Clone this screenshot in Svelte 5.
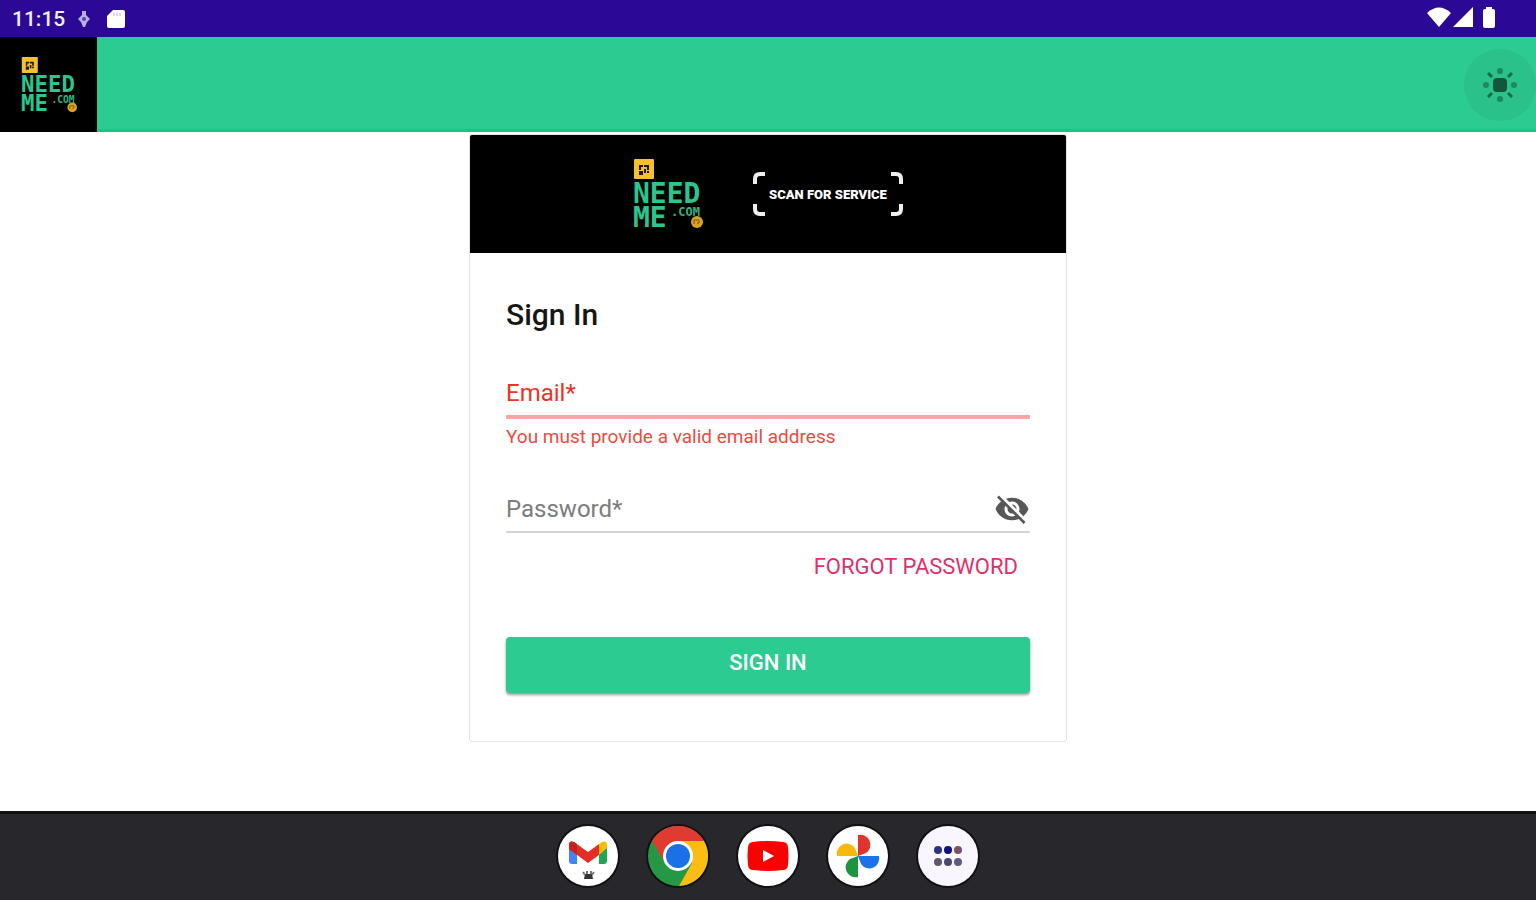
<script>
  let email = $state('');
  let password = $state('');
  let showPassword = $state(false);
  let emailError = $state('You must provide a valid email address');

  function signIn(event) {
    event.preventDefault();
    emailError = email.includes('@') ? '' : 'You must provide a valid email address';
  }
</script>

{#snippet logo()}
  <svg class="logo" viewBox="0 0 70 70" role="img" aria-label="NeedMe.com">
    <rect x="1" y="0" width="20" height="20" rx="1" fill="#f4c22f" />
    <path d="M6 6h4v2h-2v3h-2zM11 6h5v5h-2v-3h-3zM6 12h4v4h-4zM11 10h2v4h-2zM14 12h2v2h-2z" fill="#20180a" />
    <text x="0" y="44" class="logo-text">NEED</text>
    <text x="0" y="68" class="logo-text">ME</text>
    <text x="38" y="57" class="logo-small">.COM</text>
    <circle cx="64" cy="63" r="6" fill="#d9a421" />
    <path d="M61 65v-4h5v3h-2" fill="none" stroke="#76540c" stroke-width="1" />
  </svg>
{/snippet}

<div class="screen">
  <div class="status-bar">
    <div class="status-left">
      <span class="clock">11:15</span>
      <svg width="14" height="18" viewBox="0 0 14 18" fill="#b9aee6">
        <path d="M5 1h4v4l4 4-3 3-2 5h-2l-2-5-3-3 4-4z" />
        <circle cx="7" cy="9" r="2" fill="#5a42ad" />
      </svg>
      <svg class="card-icon" width="18" height="18" viewBox="0 0 18 18">
        <path d="M6 0h10a2 2 0 0 1 2 2v14a2 2 0 0 1-2 2H2a2 2 0 0 1-2-2V6z" fill="#fff" />
        <path d="M7 3v3M10 3v3M13 3v3" stroke="#b9b0dd" stroke-width="1" />
      </svg>
    </div>
    <div class="status-right">
      <svg width="24" height="20" viewBox="0 0 24 20">
        <path d="M12 20 0 6Q12-5 24 6z" fill="#fff" />
      </svg>
      <svg width="20" height="20" viewBox="0 0 20 20">
        <path d="M20 0v20H0z" fill="#fff" />
      </svg>
      <svg class="battery" width="12" height="21" viewBox="0 0 12 21">
        <path d="M3 0h6v2h1a2 2 0 0 1 2 2v15a2 2 0 0 1-2 2H2a2 2 0 0 1-2-2V4a2 2 0 0 1 2-2h1z" fill="#fff" />
      </svg>
    </div>
  </div>

  <header class="app-bar">
    <a class="home" href="/">{@render logo()}</a>
    <button class="theme" type="button" aria-label="Toggle brightness">
      <svg width="34" height="34" viewBox="0 0 34 34">
        <rect x="10" y="10" width="14" height="14" rx="4" fill="#12573d" />
        <g fill="#1f8660">
          <circle cx="17" cy="3" r="3" />
          <circle cx="17" cy="31" r="3" />
          <circle cx="3" cy="17" r="3" />
          <circle cx="31" cy="17" r="3" />
        </g>
        <path d="m5 5 4 4M29 5l-4 4M5 29l4-4M29 29l-4-4" stroke="#17694a" stroke-width="3" />
      </svg>
    </button>
  </header>

  <main>
    <section class="card">
      <div class="banner">
        {@render logo()}
        <div class="scan">
          <svg viewBox="0 0 150 44" fill="none" stroke="#eee" stroke-width="4">
            <path d="M2 12V7q0-5 5-5h5M138 2h5q5 0 5 5v5M2 32v5q0 5 5 5h5M138 42h5q5 0 5-5v-5" />
          </svg>
          <span>SCAN FOR SERVICE</span>
        </div>
      </div>

      <form onsubmit={signIn} novalidate>
        <h1>Sign In</h1>

        <div class="field" class:error={emailError}>
          <label for="email" class:hidden={email}>Email*</label>
          <input id="email" type="email" bind:value={email} aria-describedby="email-help" />
        </div>
        <p id="email-help" class="help">{emailError}</p>

        <div class="field">
          <label for="password" class:hidden={password}>Password*</label>
          <input id="password" type={showPassword ? 'text' : 'password'} bind:value={password} />
          <button class="eye" type="button" aria-label="Show password" onclick={() => (showPassword = !showPassword)}>
            <svg width="36" height="36" viewBox="0 0 24 24" fill="#575757">
              <path d="M12 7c2.760 0 5 2.240 5 5 0 .65-.13 1.260-.36 1.830l2.920 2.920c1.510-1.260 2.700-2.890 3.430-4.750-1.730-4.390-6-7.500-11-7.500-1.400 0-2.740.25-3.980.7l2.160 2.160C10.740 7.130 11.350 7 12 7zM2 4.270l2.280 2.280.46.46C3.080 8.300 1.780 10.020 1 12c1.730 4.390 6 7.500 11 7.500 1.550 0 3.030-.3 4.380-.84l.42.42L19.730 22 21 20.730 3.270 3 2 4.270zM7.530 9.800l1.550 1.550c-.05.21-.08.43-.08.65 0 1.660 1.340 3 3 3 .22 0 .44-.03.65-.08l1.550 1.550c-.67.33-1.410.53-2.200.53-2.760 0-5-2.240-5-5 0-.79.2-1.530.53-2.200zm4.310-.78 3.150 3.150.02-.16c0-1.660-1.340-3-3-3l-.17.01z" />
            </svg>
          </button>
        </div>

        <button class="forgot" type="button">FORGOT PASSWORD</button>
        <button class="submit" type="submit">SIGN IN</button>
      </form>
    </section>
  </main>

  <nav class="dock">
    <button type="button" aria-label="Gmail">
      <svg viewBox="0 0 60 60">
        <circle cx="30" cy="30" r="30" fill="#fff" />
        <path d="M11 19l8 7v12h-5q-3 0-3-3z" fill="#4285f4" />
        <path d="M49 19l-8 7v12h5q3 0 3-3z" fill="#21a453" />
        <path d="M41 18l3-2q5-2 5 3v3l-8 7z" fill="#fbbc04" />
        <path d="M11 19q0-5 5-3l14 10 11-8v11L30 37 11 23z" fill="#e52d27" />
        <path d="M11 19q0-5 5-3l3 2v11l-8-6z" fill="#c5221f" />
        <path d="M27 48h7l1 5h-9z" fill="#333" />
        <path d="M25 46l2 3M29 45v3M33 45v3M36 46l-2 3" stroke="#777" stroke-width="2" />
      </svg>
    </button>
    <button type="button" aria-label="Chrome">
      <svg viewBox="0 0 60 60">
        <circle cx="30" cy="30" r="30" fill="#259846" />
        <path d="M4 15A30 30 0 0 1 56 15H30L17 37z" fill="#df3b30" />
        <path d="M56 15A30 30 0 0 1 31 60L44 37 30 15z" fill="#fbbc13" />
        <circle cx="30" cy="30" r="15" fill="#fff" />
        <circle cx="30" cy="30" r="12" fill="#1b6fe9" />
      </svg>
    </button>
    <button type="button" aria-label="YouTube">
      <svg viewBox="0 0 60 60">
        <circle cx="30" cy="30" r="30" fill="#fff" />
        <path d="M15 16q15-2 30 0 5 0 5 6 1 8 0 16 0 6-5 6-15 2-30 0-5 0-5-6-1-8 0-16 0-6 5-6z" fill="#fe0000" />
        <path d="M25 24l11 6-11 6z" fill="#fff" />
      </svg>
    </button>
    <button type="button" aria-label="Photos">
      <svg viewBox="0 0 60 60">
        <circle cx="30" cy="30" r="30" fill="#fff" />
        <path d="M30 9A10 10 0 0 1 38 27L30 30z" fill="#e0352d" />
        <path d="M51 30A10 10 0 0 1 33 38L30 30z" fill="#1a73e8" />
        <path d="M30 51A10 10 0 0 1 22 33L30 30z" fill="#1e9440" />
        <path d="M9 30A10 10 0 0 1 27 22L30 30z" fill="#f8b90f" />
      </svg>
    </button>
    <button type="button" aria-label="All apps">
      <svg viewBox="0 0 60 60">
        <circle cx="30" cy="30" r="30" fill="#f9f6ff" />
        <circle cx="20" cy="24" r="4" fill="#2a3480" />
        <circle cx="30" cy="24" r="4" fill="#0b0f80" />
        <circle cx="40" cy="24" r="4" fill="#7b5068" />
        <circle cx="20" cy="36" r="4" fill="#5c5872" />
        <circle cx="30" cy="36" r="4" fill="#4b4870" />
        <circle cx="40" cy="36" r="4" fill="#5f5a80" />
      </svg>
    </button>
  </nav>
</div>

<style>
  :global(body) {
    margin: 0;
    background: #fff;
  }

  .screen {
    display: flex;
    flex-direction: column;
    min-height: 100vh;
    font-family: Roboto, sans-serif;
  }

  button {
    padding: 0;
    border: 0;
    background: none;
    font-family: inherit;
    cursor: pointer;
  }

  svg {
    display: block;
  }

  .status-bar {
    display: flex;
    justify-content: space-between;
    align-items: center;
    height: 37px;
    padding: 0 41px 0 12px;
    background: #2b0895;
  }

  .status-left,
  .status-right {
    display: flex;
    align-items: center;
  }

  .status-left {
    gap: 12px;
  }

  .status-right {
    gap: 2px;
    padding-bottom: 3px;
  }

  .clock {
    color: #f2efff;
    font-size: 21px;
    font-weight: 500;
    line-height: 36px;
  }

  .card-icon {
    margin-left: 4px;
  }

  .battery {
    margin-left: 8px;
  }

  .app-bar {
    display: flex;
    justify-content: space-between;
    align-items: center;
    height: 95px;
    background: #2bcb91;
    box-shadow: inset 0 -3px #14c785;
  }

  .home {
    display: flex;
    align-items: center;
    justify-content: center;
    width: 97px;
    height: 95px;
    background: #000;
  }

  .home .logo {
    width: 56px;
  }

  .theme {
    display: flex;
    align-items: center;
    justify-content: center;
    width: 72px;
    height: 72px;
    border-radius: 50%;
    background: #2ac18a;
  }

  .logo {
    width: 70px;
    overflow: visible;
  }

  .logo-text {
    fill: #2bc58e;
    font: bold 28px 'DejaVu Sans Mono', monospace;
  }

  .logo-small {
    fill: #2bb585;
    font: bold 12px 'DejaVu Sans Mono', monospace;
  }

  main {
    flex: 1;
    padding-top: 2px;
  }

  .card {
    width: 100%;
    max-width: 598px;
    box-sizing: border-box;
    margin: 0 auto;
    border: 1px solid #e4e4e4;
    border-radius: 3px;
    overflow: hidden;
  }

  .banner {
    display: flex;
    justify-content: center;
    align-items: center;
    gap: 50px;
    height: 118px;
    background: #000;
  }

  .scan {
    display: grid;
    place-items: center;
    width: 150px;
  }

  .scan svg,
  .scan span {
    grid-area: 1 / 1;
  }

  .scan svg {
    width: 100%;
  }

  .scan span {
    color: #fff;
    font-size: 13px;
    font-weight: 900;
    white-space: nowrap;
  }

  form {
    display: flex;
    flex-direction: column;
    padding: 42px 36px 48px;
  }

  h1 {
    margin: 0 0 36px;
    color: #161616;
    font-size: 30px;
    font-weight: 500;
    line-height: 40px;
  }

  .field {
    display: grid;
    grid-template-columns: 1fr auto;
    align-items: center;
    height: 44px;
    border-bottom: 2px solid #d4d4d4;
    color: #7c7c7c;
  }

  .field label,
  .field input {
    grid-area: 1 / 1;
    font: 24px Roboto, sans-serif;
  }

  .field label {
    z-index: 1;
    pointer-events: none;
  }

  .field label.hidden {
    visibility: hidden;
  }

  .field input {
    width: 100%;
    box-sizing: border-box;
    padding: 0;
    border: 0;
    outline: none;
    background: none;
    color: #222;
  }

  .error {
    border-bottom: 4px solid #f8a5a7;
    color: #ea3323;
  }

  .help {
    min-height: 24px;
    margin: 6px 0 38px;
    color: #ee4a42;
    font-size: 19px;
    line-height: 24px;
  }

  .forgot {
    align-self: flex-end;
    margin: 14px 12px 50px 0;
    color: #e22f6c;
    font-size: 22px;
    line-height: 40px;
  }

  .submit {
    height: 56px;
    padding-bottom: 6px;
    border-radius: 4px;
    background: #2bcb91;
    box-shadow: 0 2px 3px rgba(0, 0, 0, 0.4);
    color: #fff;
    font-size: 22px;
    font-weight: 500;
  }

  .dock {
    display: flex;
    justify-content: center;
    align-items: center;
    gap: 30px;
    height: 89px;
    background: #28272c;
    box-shadow: inset 0 3px #111114;
  }

  .dock button {
    width: 60px;
    height: 60px;
    border-radius: 50%;
    box-shadow: 0 0 0 2px #111114;
  }
</style>
